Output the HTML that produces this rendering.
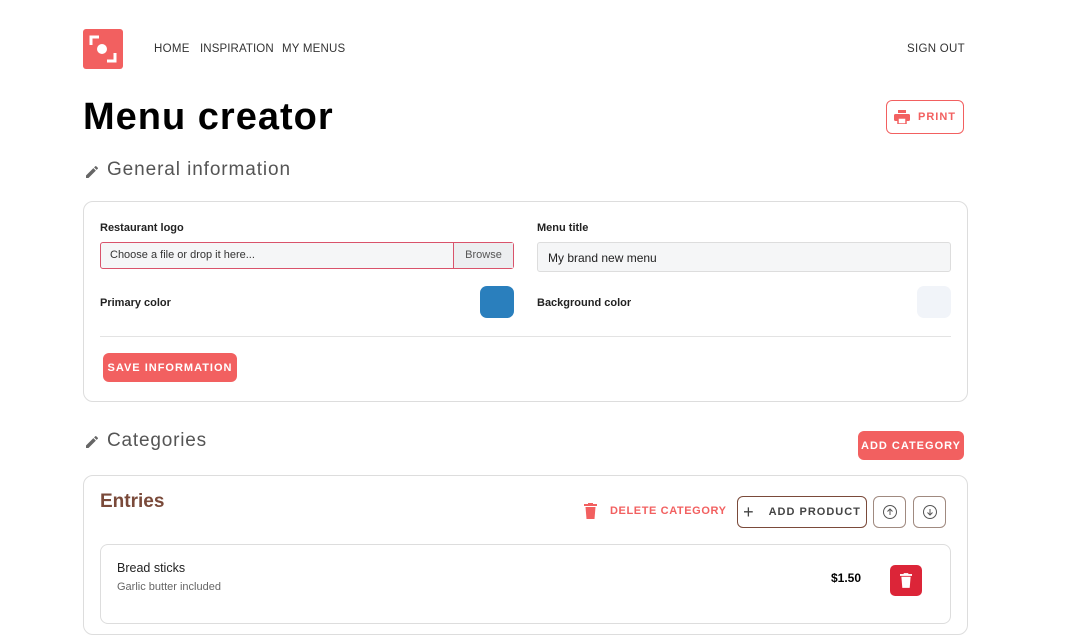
<!DOCTYPE html>
<html><head><style>
*{box-sizing:border-box;margin:0;padding:0}
body{width:1067px;height:600px;overflow:hidden;background:#fff;font-family:"Liberation Sans",sans-serif;position:relative;color:#222}
.a{position:absolute}
.nav{font-size:11.5px;color:#333;top:43px;letter-spacing:0.3px}
.btn{position:absolute;border-radius:6px;font-weight:bold;font-size:11px;letter-spacing:1px;display:flex;align-items:center;justify-content:center}
.lbl{position:absolute;font-size:11px;font-weight:bold;color:#222}
</style></head><body>
<div class="a" style="left:83px;top:29px;width:40px;height:40px;background:#f26060;border-radius:3px">
<svg width="40" height="40" viewBox="0 0 40 40"><path d="M8 16V8h8M32 24v8h-8" stroke="#fff" stroke-width="3" fill="none"/><circle cx="19" cy="20" r="5" fill="#fff"/></svg></div>
<div class="a nav" style="left:154px">HOME</div>
<div class="a nav" style="left:200px;letter-spacing:0.1px">INSPIRATION</div>
<div class="a nav" style="left:282px;letter-spacing:0.2px">MY MENUS</div>
<div class="a nav" style="left:907px">SIGN OUT</div>
<div class="a" style="left:83px;top:96px;font-size:38px;font-weight:bold;color:#000;letter-spacing:1px">Menu creator</div>
<div class="btn" style="left:886px;top:100px;width:78px;height:34px;border:1px solid #f26060;color:#f26060"><svg width="16" height="14" viewBox="0 0 16 14" style="margin-right:8px"><rect x="4" y="0" width="8" height="3" fill="#f26060"/><rect x="0" y="4" width="16" height="7" rx="1.5" fill="#f26060"/><rect x="4" y="8" width="8" height="6" fill="#fff" stroke="#f26060" stroke-width="1.5"/></svg>PRINT</div>
<svg class="a" style="left:84px;top:164px" width="16" height="16" viewBox="0 0 24 24"><path d="M3 17.25V21h3.75L17.8 9.94l-3.75-3.75zM20.7 7.04a1 1 0 000-1.41l-2.34-2.34a1 1 0 00-1.41 0l-1.83 1.83 3.75 3.75z" fill="#666"/></svg>
<div class="a" style="left:107px;top:159px;font-size:19px;color:#555;letter-spacing:0.9px">General information</div>
<div class="a" style="left:83px;top:201px;width:885px;height:201px;border:1px solid #ddd;border-radius:10px"></div>
<div class="lbl" style="left:100px;top:222px">Restaurant logo</div>
<div class="a" style="left:100px;top:242px;width:414px;height:27px;border:1px solid #d9536b;border-radius:3px;background:#f5f6f7;font-size:11px;padding:6px 9px;color:#333">Choose a file or drop it here...</div>
<div class="a" style="left:453px;top:243px;width:60px;height:25px;border-left:1px solid #d9536b;background:#eceef0;font-size:11px;color:#555;text-align:center;line-height:25px">Browse</div>
<div class="lbl" style="left:100px;top:297px">Primary color</div>
<div class="a" style="left:480px;top:286px;width:34px;height:32px;background:#2a7fbd;border-radius:7px"></div>
<div class="lbl" style="left:537px;top:222px">Menu title</div>
<div class="a" style="left:537px;top:242px;width:414px;height:30px;border:1px solid #ddd;border-radius:3px;background:#f5f6f7;font-size:12px;padding:8px 10px;color:#222">My brand new menu</div>
<div class="lbl" style="left:537px;top:297px">Background color</div>
<div class="a" style="left:917px;top:286px;width:34px;height:32px;background:#f1f4f9;border-radius:7px"></div>
<div class="a" style="left:100px;top:336px;width:851px;height:1px;background:#e3e3e3"></div>
<div class="btn" style="left:103px;top:353px;width:134px;height:29px;background:#f26060;color:#fff">SAVE INFORMATION</div>
<svg class="a" style="left:84px;top:434px" width="16" height="16" viewBox="0 0 24 24"><path d="M3 17.25V21h3.75L17.8 9.94l-3.75-3.75zM20.7 7.04a1 1 0 000-1.41l-2.34-2.34a1 1 0 00-1.41 0l-1.83 1.83 3.75 3.75z" fill="#666"/></svg>
<div class="a" style="left:107px;top:430px;font-size:19px;color:#555;letter-spacing:0.8px">Categories</div>
<div class="btn" style="left:858px;top:431px;width:106px;height:29px;background:#f26060;color:#fff">ADD CATEGORY</div>
<div class="a" style="left:83px;top:475px;width:885px;height:160px;border:1px solid #ddd;border-radius:10px"></div>
<div class="a" style="left:100px;top:491px;font-size:19px;font-weight:bold;color:#7a4a3a">Entries</div>
<svg class="a" style="left:584px;top:503px" width="13" height="16" viewBox="0 0 13 16"><rect x="0" y="1" width="13" height="2" fill="#f26060"/><rect x="4" y="0" width="5" height="2" fill="#f26060"/><path d="M1.5 4h10l-1 12h-8z" fill="#f26060"/></svg>
<div class="a" style="left:610px;top:505px;font-size:11px;font-weight:bold;letter-spacing:0.6px;color:#f26060">DELETE CATEGORY</div>
<div class="btn" style="left:737px;top:496px;width:130px;height:32px;border:1px solid #7a4a3a;color:#444"><span style="font-size:18px;font-weight:normal;margin-right:14px">+</span>ADD PRODUCT</div>
<div class="btn" style="left:873px;top:496px;width:33px;height:32px;border:1px solid #a08a80"><svg width="16" height="16" viewBox="0 0 16 16"><circle cx="8" cy="8" r="6.5" stroke="#555" fill="none"/><path d="M8 11V5M5.5 7.5L8 5l2.5 2.5" stroke="#555" fill="none"/></svg></div>
<div class="btn" style="left:913px;top:496px;width:33px;height:32px;border:1px solid #a08a80"><svg width="16" height="16" viewBox="0 0 16 16"><circle cx="8" cy="8" r="6.5" stroke="#555" fill="none"/><path d="M8 5v6M5.5 8.5L8 11l2.5-2.5" stroke="#555" fill="none"/></svg></div>
<div class="a" style="left:100px;top:544px;width:851px;height:80px;border:1px solid #ddd;border-radius:8px"></div>
<div class="a" style="left:117px;top:561px;font-size:12.5px;color:#222">Bread sticks</div>
<div class="a" style="left:117px;top:581px;font-size:11px;color:#666">Garlic butter included</div>
<div class="a" style="left:831px;top:571px;font-size:12px;font-weight:bold;color:#000">$1.50</div>
<div class="a" style="left:890px;top:565px;width:32px;height:31px;background:#dc2538;border-radius:5px"><svg style="position:absolute;left:10px;top:8px" width="12" height="15" viewBox="0 0 13 16"><rect x="0" y="1" width="13" height="2" fill="#fff"/><rect x="4" y="0" width="5" height="2" fill="#fff"/><path d="M1.5 4h10l-1 12h-8z" fill="#fff"/></svg></div>
</body></html>
